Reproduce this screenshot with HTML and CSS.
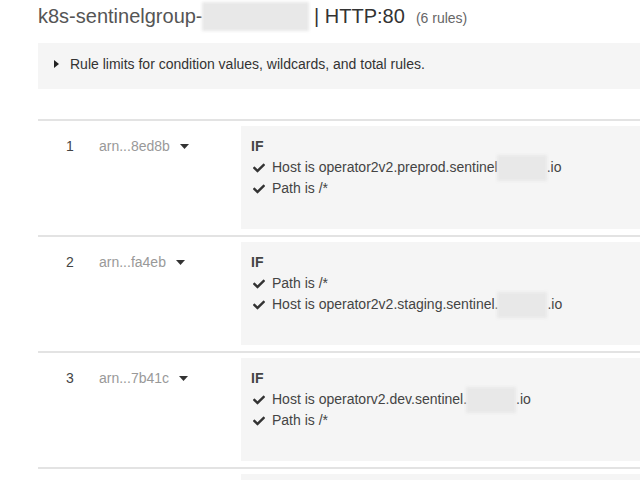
FILE: index.html
```html
<!DOCTYPE html>
<html>
<head>
<meta charset="utf-8">
<link rel="stylesheet" href="styles.css">
</head>
<body>
<div class="page">
  <h1 class="title"><span class="name">k8s-sentinelgroup-</span><span class="redact redact-title"></span> <span class="proto">| HTTP:80</span><span class="count">(6 rules)</span></h1>

  <div class="limits">
    <svg class="tri-right" width="5" height="8" viewBox="0 0 5 8"><polygon points="0,0 5,4 0,8" fill="#222"/></svg>
    <span>Rule limits for condition values, wildcards, and total rules.</span>
  </div>

  <div class="rules">
    <div class="rule">
      <div class="num">1</div>
      <div class="arn">arn...8ed8b <svg class="tri-down" width="9" height="5" viewBox="0 0 9 5"><polygon points="0,0 9,0 4.5,5" fill="#333"/></svg></div>
      <div class="cond">
        <div class="if">IF</div>
        <div class="line"><svg class="check" viewBox="0 0 512 512"><path d="M173.9 439.4l-166.4-166.4c-10-10-10-26.2 0-36.2l36.2-36.2c10-10 26.2-10 36.2 0L192 312.7 432.1 72.6c10-10 26.2-10 36.2 0l36.2 36.2c10 10 10 26.2 0 36.2l-294.4 294.4c-10 10-26.2 10-36.2 0z"/></svg>Host is operator2v2.preprod.sentinel<span class="redact redact-host"></span>.io</div>
        <div class="line"><svg class="check" viewBox="0 0 512 512"><path d="M173.9 439.4l-166.4-166.4c-10-10-10-26.2 0-36.2l36.2-36.2c10-10 26.2-10 36.2 0L192 312.7 432.1 72.6c10-10 26.2-10 36.2 0l36.2 36.2c10 10 10 26.2 0 36.2l-294.4 294.4c-10 10-26.2 10-36.2 0z"/></svg>Path is /*</div>
      </div>
    </div>

    <div class="rule">
      <div class="num">2</div>
      <div class="arn">arn...fa4eb <svg class="tri-down" width="9" height="5" viewBox="0 0 9 5"><polygon points="0,0 9,0 4.5,5" fill="#333"/></svg></div>
      <div class="cond">
        <div class="if">IF</div>
        <div class="line"><svg class="check" viewBox="0 0 512 512"><path d="M173.9 439.4l-166.4-166.4c-10-10-10-26.2 0-36.2l36.2-36.2c10-10 26.2-10 36.2 0L192 312.7 432.1 72.6c10-10 26.2-10 36.2 0l36.2 36.2c10 10 10 26.2 0 36.2l-294.4 294.4c-10 10-26.2 10-36.2 0z"/></svg>Path is /*</div>
        <div class="line"><svg class="check" viewBox="0 0 512 512"><path d="M173.9 439.4l-166.4-166.4c-10-10-10-26.2 0-36.2l36.2-36.2c10-10 26.2-10 36.2 0L192 312.7 432.1 72.6c10-10 26.2-10 36.2 0l36.2 36.2c10 10 10 26.2 0 36.2l-294.4 294.4c-10 10-26.2 10-36.2 0z"/></svg>Host is operator2v2.staging.sentinel.<span class="redact redact-host"></span>.io</div>
      </div>
    </div>

    <div class="rule">
      <div class="num">3</div>
      <div class="arn">arn...7b41c <svg class="tri-down" width="9" height="5" viewBox="0 0 9 5"><polygon points="0,0 9,0 4.5,5" fill="#333"/></svg></div>
      <div class="cond">
        <div class="if">IF</div>
        <div class="line"><svg class="check" viewBox="0 0 512 512"><path d="M173.9 439.4l-166.4-166.4c-10-10-10-26.2 0-36.2l36.2-36.2c10-10 26.2-10 36.2 0L192 312.7 432.1 72.6c10-10 26.2-10 36.2 0l36.2 36.2c10 10 10 26.2 0 36.2l-294.4 294.4c-10 10-26.2 10-36.2 0z"/></svg>Host is operatorv2.dev.sentinel.<span class="redact redact-host"></span>.io</div>
        <div class="line"><svg class="check" viewBox="0 0 512 512"><path d="M173.9 439.4l-166.4-166.4c-10-10-10-26.2 0-36.2l36.2-36.2c10-10 26.2-10 36.2 0L192 312.7 432.1 72.6c10-10 26.2-10 36.2 0l36.2 36.2c10 10 10 26.2 0 36.2l-294.4 294.4c-10 10-26.2 10-36.2 0z"/></svg>Path is /*</div>
      </div>
    </div>

    <div class="rule">
      <div class="num"></div>
      <div class="arn"></div>
      <div class="cond"></div>
    </div>
  </div>
</div>
</body>
</html>
```

FILE: styles.css
```css
html, body {
  margin: 0;
  padding: 0;
  background: #fff;
}
body {
  height: 480px;
  overflow: hidden;
  font-family: "Liberation Sans", Arial, sans-serif;
  color: #444;
}
.page {
  padding-left: 38px;
}
.title {
  margin: 0;
  height: 30px;
  padding-top: 1px;
  font-size: 20px;
  font-weight: normal;
  line-height: 30px;
  white-space: nowrap;
}
.name {
  color: #555;
}
.proto {
  color: #333;
}
.count {
  font-size: 14px;
  color: #666;
  margin-left: 11px;
}
.redact {
  display: inline-block;
  background: #e8e8e8;
  filter: blur(1.5px);
}
.redact-title {
  width: 107px;
  height: 29px;
  margin-left: -1px;
  vertical-align: -8px;
}
.redact-host {
  width: 50px;
  height: 26px;
  margin: -6px 0 -6px -1px;
  vertical-align: -8px;
}
.limits {
  margin-top: 12px;
  background: #f5f5f5;
  padding: 12px 16px 16px;
  display: flex;
  align-items: center;
  gap: 11px;
  font-size: 14px;
  line-height: 18px;
  color: #333;
}
.tri-right {
  display: block;
  flex: none;
}
.rules {
  margin-top: 30px;
}
.rule {
  display: grid;
  grid-template-columns: 61px 142px 1fr;
  align-items: start;
  border-top: 2px solid #e3e3e3;
  padding: 5px 0 6px;
  font-size: 14px;
}
.num {
  padding: 9px 0 0 28px;
  line-height: 22px;
  color: #444;
}
.arn {
  padding-top: 9px;
  height: 22px;
  line-height: 22px;
  color: #999;
  display: flex;
  align-items: center;
  gap: 10px;
  white-space: nowrap;
}
.tri-down {
  display: block;
}
.cond {
  background: #f5f5f5;
  height: 103px;
  box-sizing: border-box;
  padding: 10px 10px 0 10px;
  color: #444;
}
.if {
  font-weight: bold;
  line-height: 21px;
}
.line {
  height: 21px;
  line-height: 21px;
  white-space: nowrap;
  display: flex;
  align-items: center;
}
.check {
  width: 12px;
  height: 12px;
  fill: #333;
  margin-left: 2px;
  margin-right: 7px;
  flex: none;
}
```
